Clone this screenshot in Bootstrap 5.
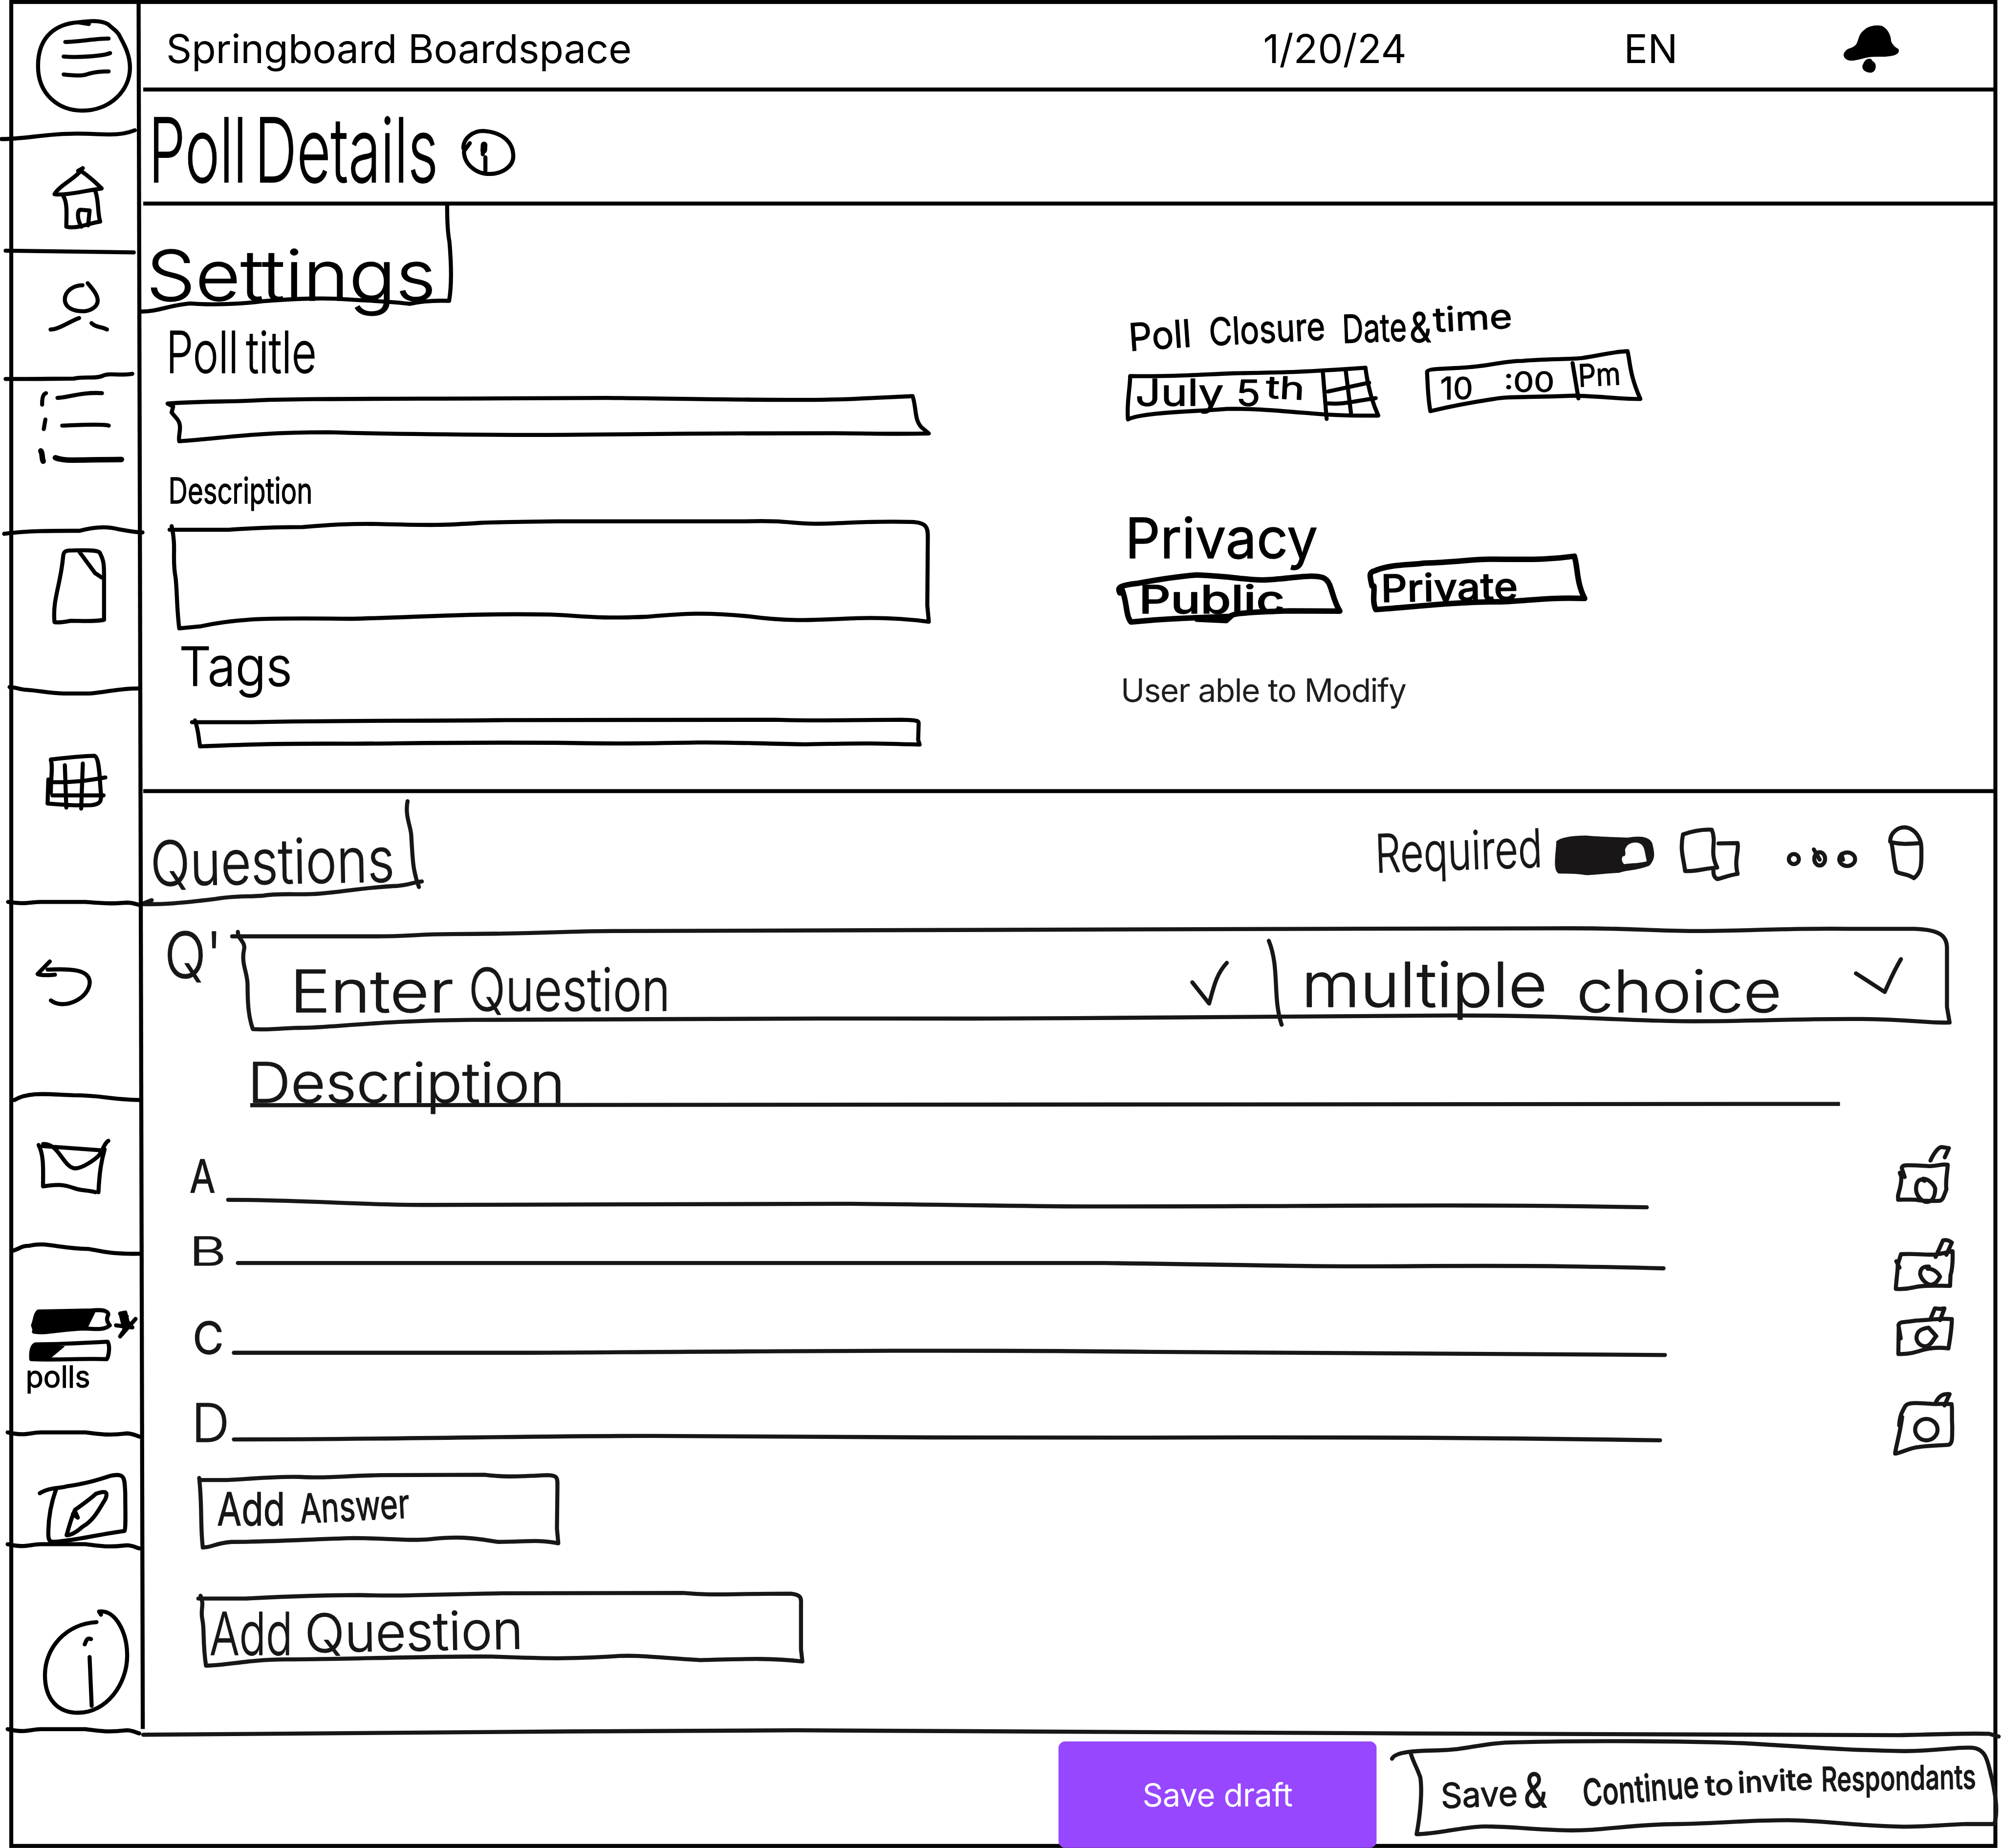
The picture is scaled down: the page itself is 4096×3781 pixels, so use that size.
<!DOCTYPE html>
<html lang="en">
<head>
<meta charset="utf-8">
<title>Springboard Boardspace - Poll Details</title>
<meta name="viewport" content="width=device-width, initial-scale=1">
<link href="https://cdn.jsdelivr.net/npm/bootstrap@5.3.0/dist/css/bootstrap.min.css" rel="stylesheet">
<style>
  html, body { overflow: hidden; background: #fff; }
  body { width: 4096px; height: 3781px; font-family: Inter, "Liberation Sans", sans-serif; color: #000; }
  .board { width: 4528px; height: 4180px; transform: scale(.9045); transform-origin: 0 0; }
  .board-frame { top: 0; left: 21px; width: 4497px; height: 4180px; border: 9px solid #000; pointer-events: none; }
  .rail { width: 324px; height: 3915px; }
  .rail-edge { top: 0; left: 0; pointer-events: none; }
  svg { display: block; overflow: visible; flex: none; }
  .ink path, .ink ellipse { fill: none; stroke: currentColor; stroke-width: 9.2px; stroke-linecap: round; stroke-linejoin: round; vector-effect: non-scaling-stroke; }
  .ink .solid { fill: currentColor; stroke-width: 2px; }
  .ink .knob { fill: #fff; stroke: none; }
  .ink .bold { stroke-width: 12.5px; }
  .ink .fat { stroke-width: 15px; }
  .ink .butt { stroke-linecap: butt; }
  .ink text { fill: currentColor; stroke: currentColor; stroke-width: 1.5px; stroke-linejoin: round; font-family: Inter, "Liberation Sans", sans-serif; font-weight: 300; }
  .ink .mid { font-weight: 400; }
  .ink .heavy { font-weight: 500; }
  .graphite { color: #181617; }
  .main-pane { margin-right: 12px; }
  .topbar { height: 207px; padding: 24px 0 0 52px; border-bottom: 9px solid #000; font-size: 90px; line-height: 1; }
  .topbar .brand { width: 2481px; letter-spacing: -.4px; }
  .topbar .day { width: 816px; }
  .topbar .lang { width: 492px; }
  .titlebar { height: 258px; border-bottom: 9px solid #000; }
  .settings { height: 1329px; border-bottom: 9px solid #000; }
  .settings-left { width: 2176px; }
  .questions { height: 2121px; }
  .modify { font-size: 73px; line-height: 1; letter-spacing: -1.7px; color: #1e1e1e; padding: 36px 0 0 35px; }
  .actions { height: 265px; }
  .tools { padding-right: 142px; }
  .answer { padding-right: 86px; }
  .btn-draft { width: 720px; height: 241px; margin: 24px 0 0 2394px; border-radius: 16px; background: #9747ff; color: #fff; font-size: 72px; line-height: 1; letter-spacing: -.7px; z-index: 2; }
  .sketch-btn { display: block; padding: 0; border: 0; border-radius: 0; color: inherit; }
</style>
<script src="https://cdn.jsdelivr.net/npm/bootstrap@5.3.0/dist/js/bootstrap.bundle.min.js"></script>
</head>
<body>
<div class="board position-relative">
  <div class="d-flex">

    <nav class="rail position-relative d-flex flex-column" aria-label="Main">
      <a class="text-reset" aria-label="Menu"><svg class="ink" width="324" height="310" viewBox="0 0 324 310"><g transform="scale(.33333 .76531)">
        <path d="M530 66C400 70 258 100 258 195C258 280 400 327 560 327C740 327 882 270 882 200C882 160 840 130 810 105C800 92 750 80 735 72C680 58 600 62 530 66L603 71"/>
        <path d="M443 124C540 123 650 114 737 114M432 167C520 171 700 166 747 157M432 220C560 226 580 222 610 217C660 211 700 211 737 211"/>
        <path d="M10 411C180 411 300 395 520 395C700 395 800 405 915 385"/></g></svg></a>
      <a class="text-reset" aria-label="Home"><svg class="ink" width="324" height="265" viewBox="0 310 324 265"><g transform="scale(.33333 .76531)">
        <path d="M530 505L562 497M548 505C500 530 400 550 370 574C450 578 560 565 690 557C650 540 600 520 548 505"/>
        <path d="M430 580C460 600 450 640 450 670C520 678 600 660 680 655C660 630 672 590 645 563M552 670C520 645 525 622 545 620L608 622L598 666"/>
        <path d="M38 741L908 746"/></g></svg></a>
      <a class="text-reset" aria-label="Profile"><svg class="ink" width="324" height="290" viewBox="0 575 324 290"><g transform="scale(.33333 .76531)">
        <path d="M560 843C500 843 440 860 440 885C440 910 500 920 560 920C610 920 663 908 663 888C663 870 620 850 595 837M343 974C400 974 480 948 537 940M621 955C650 968 690 965 726 974"/>
        <path d="M38 1120C150 1121 400 1119 500 1119C580 1112 640 1120 690 1112C740 1100 800 1112 898 1105"/></g></svg></a>
      <a class="text-reset" aria-label="Lists"><svg class="ink" width="324" height="350" viewBox="0 865 324 350">
        <g transform="scale(.33333 .76531)"><path d="M312 1162C290 1165 285 1180 286 1196M390 1176C450 1176 560 1158 692 1162M308 1240L297 1268M422 1258C500 1257 700 1252 738 1258"/>
        <path class="bold" d="M277 1333C290 1340 283 1355 293 1363M376 1353C440 1364 500 1359 824 1358"/></g>
        <g transform="translate(0 1180) scale(.33333 .76531)"><path d="M28 36C200 26 400 27 540 27C600 20 700 10 800 22C860 26 900 31 967 32"/></g></svg></a>
      <a class="text-reset" aria-label="Files"><svg class="ink" width="324" height="360" viewBox="0 1215 324 360"><g transform="translate(0 1180) scale(.33333 .76531)">
        <path d="M370 297C355 230 410 190 428 105C430 85 450 85 500 85C600 84 680 84 680 95C705 115 706 130 706 160L706 290C640 296 550 293 480 293C420 298 390 299 370 297M540 90L645 152L690 165"/>
        <path d="M65 489C110 489 130 496 180 497C260 499 330 507 430 508L610 508C740 503 800 493 938 493"/></g></svg></a>
      <a class="text-reset" aria-label="Calendar"><svg class="ink" width="324" height="480" viewBox="0 1575 324 480"><g transform="translate(0 1180) scale(.33333 .76531)">
        <path d="M345 705C360 720 345 760 345 800M328 762L323 833C400 836 500 840 620 838C690 835 690 825 682 790C675 740 670 695 640 692C570 692 400 700 345 703M440 720L450 845M562 715L551 848M365 770C500 771 600 765 715 756M355 809L703 809"/>
        <path d="M55 1124C180 1132 200 1124 280 1124L580 1124C700 1128 740 1130 860 1126C900 1126 920 1130 945 1133"/></g></svg></a>
      <a class="text-reset" aria-label="Back"><svg class="ink" width="324" height="430" viewBox="0 2055 324 430">
        <g transform="translate(0 1180) scale(.33333 .76531)"><path d="M338 1300L255 1337C290 1343 340 1340 373 1339M323 1324C480 1321 608 1323 609 1362C605 1410 430 1445 345 1415"/></g>
        <g transform="translate(0 2300) scale(.33333 1.19898)"><path d="M98 157C200 140 350 147 500 148C700 148 740 156 945 157"/></g></svg></a>
      <a class="text-reset" aria-label="Mail"><svg class="ink" width="324" height="335" viewBox="0 2485 324 335"><g transform="translate(0 2300) scale(.33333 1.19898)">
        <path d="M262 242C300 262 292 290 292 320C400 315 440 317 500 323C540 328 600 327 648 331M292 240C400 238 430 285 510 286C560 286 640 270 670 262C700 250 710 238 735 234M668 331C675 290 690 270 710 250M290 244L690 252"/>
        <path d="M92 441C150 435 150 432 200 432C300 424 400 437 600 438C700 442 740 448 945 447"/></g></svg></a>
      <a class="text-reset" aria-label="Polls"><svg class="ink" width="324" height="425" viewBox="0 2820 324 425"><g transform="translate(0 2300) scale(.33333 1.19898)">
        <path d="M225 582C240 570 240 560 260 556L620 554C700 552 735 555 735 562C720 570 725 575 745 582C700 593 630 588 560 588C400 590 300 598 230 594"/>
        <path class="solid" d="M213 582L255 556L650 554L590 588L400 592L230 597L222 590Z"/>
        <path d="M787 582L898 586L815 560L850 558L870 580L815 603L920 570M820 562L845 590L860 565"/>
        <path d="M212 645C208 630 220 620 240 618C400 618 600 615 730 613C748 620 740 638 725 646C600 644 400 648 212 646"/>
        <path class="solid" d="M208 646L225 620L435 622L345 643Z"/>
        <path d="M52 784C180 792 200 784 280 784L580 784C700 788 740 790 860 786C900 786 920 790 945 792"/></g>
        <text class="mid" x="58" y="3139" font-size="68" textLength="146" lengthAdjust="spacingAndGlyphs">polls</text></svg></a>
      <a class="text-reset" aria-label="Notes"><svg class="ink" width="324" height="255" viewBox="0 3245 324 255"><g transform="translate(0 2300) scale(.33333 1.19898)">
        <path d="M270 899C330 888 400 890 450 886C600 880 680 872 750 866C850 860 845 870 850 900C850 930 855 965 845 970C700 975 560 985 450 988C340 992 325 995 328 970C330 940 350 915 380 892M452 978C480 950 500 935 510 930C570 918 620 908 650 900C700 895 740 893 715 910C680 925 640 950 560 962C520 972 480 978 452 978M495 938L528 945L508 932"/>
        <path d="M52 995C180 1003 200 995 280 995L580 995C700 999 740 1001 860 997C900 997 920 1001 945 1003"/></g></svg></a>
      <a class="text-reset" aria-label="Info"><svg class="ink" width="324" height="415" viewBox="0 3500 324 415"><g transform="translate(0 2300) scale(.33333 1.19898)">
        <path d="M655 1142C450 1145 305 1190 305 1242C305 1290 400 1313 530 1313C720 1313 863 1260 863 1205C863 1160 780 1118 672 1122L685 1128M575 1184C590 1172 600 1172 618 1174M608 1208L622 1300"/>
        <path d="M52 1344C180 1352 200 1344 280 1344L580 1344C700 1348 740 1350 860 1346C900 1346 920 1350 945 1352"/></g></svg></a>
      <svg class="ink rail-edge position-absolute" width="324" height="3915" viewBox="0 0 324 3915"><path class="butt" d="M313.5 4L323 3911"/></svg>
    </nav>

    <main class="main-pane flex-grow-1">
      <header class="topbar d-flex align-items-center">
        <div class="brand text-nowrap">Springboard Boardspace</div>
        <div class="day">1/20/24</div>
        <div class="lang">EN</div>
        <svg class="ink" width="140" height="174" viewBox="4165 24 140 174" role="img" aria-label="Notifications"><g transform="translate(3600 0) scale(.59184 .33333)">
          <path class="solid" d="M1050 195C1070 175 1090 173 1108 178C1130 195 1143 240 1143 280C1150 310 1160 325 1172 335C1178 370 1150 383 1100 382C1040 382 1050 395 1000 408C975 412 965 390 965 370C970 340 985 330 992 328C1025 305 1015 270 1030 230C1038 210 1045 205 1050 195Z"/>
          <path class="solid" d="M1055 403C1065 398 1070 405 1072 416C1090 430 1088 480 1070 490C1045 490 1035 470 1037 445C1042 430 1043 410 1055 403Z"/></g></svg>
      </header>

      <div class="titlebar d-flex">
        <svg class="ink" width="700" height="249" viewBox="324 207 700 249">
          <text x="336" y="412" font-size="202" textLength="655" word-spacing="-30" lengthAdjust="spacingAndGlyphs">Poll Details</text></svg>
        <svg class="ink" width="160" height="249" viewBox="1024 207 160 249" role="img" aria-label="About polls"><g transform="translate(300 0) scale(.73342 .45918)">
          <path d="M1020 730C1020 680 1050 645 1080 645C1140 650 1174 700 1174 770C1174 820 1140 857 1100 857C1060 857 1022 810 1022 745L1040 705M1088 775L1088 840"/>
          <path class="fat" d="M1084 714L1083 740"/><path d="M1080 740L1080 760"/></g></svg>
      </div>

      <section class="settings d-flex">
        <div class="settings-left d-flex flex-column">
          <svg class="ink" width="716" height="260" viewBox="324 465 716 260"><g transform="translate(300 0) scale(.73342 .45918)">
            <path d="M970 1013C970 1100 972 1150 977 1190C983 1300 985 1400 976 1482C940 1480 900 1480 855 1497C800 1485 740 1483 650 1474C600 1467 500 1470 400 1484C350 1495 250 1505 180 1495C120 1500 80 1535 27 1535"/></g>
            <text x="331" y="680" font-size="158" textLength="655" lengthAdjust="spacingAndGlyphs">Settings</text></svg>
          <label><svg class="ink" width="1800" height="295" viewBox="324 725 1800 295">
            <text x="376" y="844" font-size="130" word-spacing="-14" textLength="340" lengthAdjust="spacingAndGlyphs">Poll title</text>
            <g transform="translate(340 700) scale(1.14796 .67602)"><path d="M34 315C100 306 150 310 210 304C300 298 400 300 900 296C1100 299 1300 308 1400 298L1502 290C1510 330 1505 370 1520 395L1534 415C1450 418 1400 414 1350 414C1000 414 900 420 750 420C500 418 430 415 350 411C200 411 150 430 57 441C54 420 65 390 52 365L42 345L45 325Z"/></g></svg></label>
          <label><svg class="ink" width="1800" height="410" viewBox="324 1020 1800 410">
            <text class="mid" x="381" y="1139" font-size="80" textLength="326" lengthAdjust="spacingAndGlyphs">Description</text>
            <g transform="translate(340 700) scale(1.14796 .67602)"><path d="M38 737L155 737C200 733 220 728 300 728C360 720 400 716 450 718C560 723 580 722 650 714C700 711 750 710 800 709L1170 709C1260 705 1260 717 1310 717C1370 717 1400 707 1500 711C1530 713 1532 730 1532 760L1531 990L1534 1045C1500 1037 1450 1030 1390 1033C1300 1040 1260 1045 1180 1027C1090 1012 1050 1018 980 1028C880 1036 850 1025 790 1021C650 1016 550 1028 400 1035C250 1033 180 1030 100 1060L57 1067C52 1000 53 950 50 900C42 830 52 800 42 725"/></g></svg></label>
          <label><svg class="ink" width="1800" height="355" viewBox="324 1430 1800 355">
            <text x="405" y="1551" font-size="122" textLength="256" lengthAdjust="spacingAndGlyphs">Tags</text>
            <g transform="translate(340 700) scale(1.14796 .67602)"><path d="M82 1381L200 1381C400 1374 500 1378 700 1374L1230 1373C1300 1376 1300 1375 1480 1373C1515 1374 1514 1378 1514 1385L1513 1440L1516 1456C1400 1450 1400 1452 1290 1455C1200 1453 1150 1448 1080 1449C950 1453 900 1453 800 1450C600 1448 500 1452 400 1453C250 1452 200 1455 98 1462C94 1420 95 1410 88 1375"/></g></svg></label>
        </div>
        <div class="d-flex flex-column">
          <svg class="ink" width="1000" height="355" viewBox="2500 465 1000 355">
            <text class="mid" x="2555" y="794" font-size="86" textLength="142" lengthAdjust="spacingAndGlyphs" transform="rotate(-4 2555 794)">Poll</text>
            <text class="mid" x="2736" y="782" font-size="86" textLength="263" lengthAdjust="spacingAndGlyphs" transform="rotate(-3 2736 782)">Closure</text>
            <text class="mid" x="3037" y="776" font-size="88" textLength="146" lengthAdjust="spacingAndGlyphs" transform="rotate(-2 3037 776)">Date</text>
            <text class="mid" x="3188" y="774" font-size="94" textLength="50" lengthAdjust="spacingAndGlyphs">&amp;</text>
            <text class="mid" x="3243" y="751" font-size="76" textLength="179" lengthAdjust="spacingAndGlyphs" transform="rotate(-3 3243 751)">time</text></svg>
          <div class="d-flex">
            <svg class="ink" width="690" height="310" viewBox="2500 820 690 310"><g transform="translate(2500 660) scale(.82908 .625)">
              <path d="M68 305C200 307 250 300 350 295C500 292 550 290 710 275C715 330 725 390 745 448C650 450 600 445 560 440C450 428 400 422 330 424C260 433 100 435 62 462C58 400 68 350 68 305M594 295L604 460M656 283L671 445M608 361L720 329M608 404C650 408 670 398 738 385"/></g>
              <text class="mid" x="2568" y="918" font-size="84" textLength="200" lengthAdjust="spacingAndGlyphs">July</text>
              <text class="mid" x="2796" y="918" font-size="80" textLength="55" lengthAdjust="spacingAndGlyphs">5</text>
              <text class="mid" x="2862" y="900" font-size="70" textLength="88" lengthAdjust="spacingAndGlyphs" transform="rotate(3 2862 900)">th</text></svg>
            <svg class="ink" width="560" height="310" viewBox="3190 820 560 310"><g transform="translate(2500 660) scale(.82908 .625)">
              <path d="M878 290C880 275 950 280 1000 272C1060 265 1090 250 1140 250C1200 243 1260 245 1300 240C1360 228 1380 218 1425 215C1432 250 1430 300 1460 388C1400 388 1350 378 1280 376C1150 383 1100 378 1060 388C1000 400 950 412 887 432C880 380 880 340 878 290M1275 258L1291 386"/></g>
              <text class="mid" x="3258" y="903" font-size="70" textLength="74" lengthAdjust="spacingAndGlyphs">10</text>
              <text class="mid" x="3402" y="887" font-size="64" textLength="114" lengthAdjust="spacingAndGlyphs">:00</text>
              <text class="mid" x="3571" y="875" font-size="70" textLength="96" lengthAdjust="spacingAndGlyphs" transform="rotate(-3 3571 875)">Pm</text></svg>
          </div>
          <svg class="ink" width="1200" height="160" viewBox="2500 1130 1200 160">
            <text class="mid" x="2545" y="1263" font-size="126" textLength="436" lengthAdjust="spacingAndGlyphs">Privacy</text></svg>
          <div class="d-flex">
            <button type="button" class="btn sketch-btn"><svg class="ink" width="570" height="199" viewBox="2500 1290 570 199"><g transform="translate(2500 660) scale(.82908 .625)">
              <path class="bold" d="M40 1090C32 1070 40 1062 90 1055C150 1040 200 1030 250 1025C350 1030 380 1043 430 1043C500 1040 560 1020 595 1035C620 1050 615 1100 640 1156L500 1155C400 1160 350 1162 340 1175C200 1182 150 1185 70 1195C55 1170 60 1120 45 1075M250 1185L330 1190L345 1172"/></g>
              <text class="heavy" x="2576" y="1387" font-size="88" textLength="330" lengthAdjust="spacingAndGlyphs">Public</text></svg></button>
            <button type="button" class="btn sketch-btn"><svg class="ink" width="560" height="199" viewBox="3070 1290 560 199"><g transform="translate(2500 660) scale(.82908 .625)">
              <path class="bold" d="M728 1065C722 1030 718 1015 735 1010C780 985 830 990 870 982C950 980 1000 968 1050 968C1150 968 1200 972 1280 957C1290 1000 1285 1050 1308 1110C1200 1105 1150 1120 1080 1122C950 1122 850 1140 738 1150C728 1120 735 1090 733 1065"/></g>
              <text class="heavy" x="3124" y="1362" font-size="86" textLength="310" lengthAdjust="spacingAndGlyphs" transform="rotate(-1 3124 1362)">Private</text></svg></button>
          </div>
          <div class="modify">User able to Modify</div>
        </div>
      </section>

      <section class="questions graphite">
        <div class="d-flex justify-content-between">
          <svg class="ink" width="676" height="266" viewBox="324 1794 676 266"><g transform="translate(320 1780) scale(.82908 .49745)">
            <path d="M726 65C718 130 735 180 736 220C740 330 740 380 757 455M765 430C740 435 730 445 700 450C620 455 560 475 500 483C440 495 380 480 330 495C280 500 250 495 200 510C100 530 60 535 0 533L28 515"/></g>
            <text x="341" y="2004" font-size="140" textLength="552" lengthAdjust="spacingAndGlyphs" transform="rotate(-1 341 2004)">Questions</text></svg>
          <div class="tools d-flex">
            <svg class="ink" width="400" height="266" viewBox="3100 1794 400 266"><text x="3112" y="1974" font-size="120" textLength="378" lengthAdjust="spacingAndGlyphs" transform="rotate(-2 3112 1974)">Required</text></svg>
            <svg class="ink" width="280" height="266" viewBox="3500 1794 280 266" role="img" aria-label="Required on"><g transform="translate(3050 1800) scale(.94260 .35714)">
              <path class="solid" d="M500 290C510 265 540 255 570 255C610 265 650 265 670 268C700 255 720 260 728 300C735 370 735 400 722 440C690 475 670 465 650 485C610 490 590 500 570 500C550 490 520 490 505 490C490 470 500 350 500 290Z"/>
              <path class="knob" d="M664 340C668 310 676 297 690 296C703 298 709 320 711 350L716 415C700 428 680 426 662 433C656 420 655 400 658 384C668 384 664 360 664 340Z"/></g></svg>
            <svg class="ink" width="220" height="266" viewBox="3780 1794 220 266" role="img" aria-label="Duplicate"><g transform="translate(3050 1800) scale(.94260 .35714)">
              <path d="M803 245C830 220 850 212 872 215C885 300 865 350 885 455C850 460 840 480 808 477C805 400 795 350 803 245M888 302L934 300C938 350 925 400 934 495C910 505 900 520 885 528C875 510 876 490 876 465"/></g></svg>
            <svg class="ink" width="240" height="266" viewBox="4000 1794 240 266" role="img" aria-label="More"><g transform="translate(3050 1800) scale(.94260 .35714)">
              <ellipse cx="1069" cy="401" rx="12" ry="32"/><ellipse cx="1131" cy="400" rx="13" ry="42"/><path d="M1117 340L1131 405"/><ellipse cx="1197" cy="402" rx="19" ry="43"/><path d="M1183 370L1187 405"/></g></svg>
            <svg class="ink" width="134" height="266" viewBox="4240 1794 134 266" role="img" aria-label="Delete"><g transform="translate(3050 1800) scale(.94260 .35714)">
              <path d="M1300 290C1300 230 1320 200 1335 200C1360 205 1375 270 1375 330C1375 420 1378 480 1357 522C1340 490 1325 500 1315 480C1308 420 1308 350 1303 295C1330 310 1345 305 1372 300"/></g></svg>
          </div>
        </div>

        <div class="d-flex">
          <svg class="ink" width="191" height="310" viewBox="324 2060 191 310">
            <text x="372" y="2212" font-size="144" textLength="130" lengthAdjust="spacingAndGlyphs">Q'</text></svg>
          <svg class="ink" width="3905" height="310" viewBox="515 2060 3905 310">
            <path stroke="#000" d="M525 2118L851 2118C920 2118 950 2113 1025 2113C1250 2112 1300 2105 1398 2106C2000 2105 2500 2102 3000 2101L3500 2100C3700 2098 3720 2106 3832 2106C3960 2106 4040 2099 4181 2101L4330 2101C4390 2103 4404 2118 4404 2145L4404 2278L4410 2313C4350 2315 4320 2304 4181 2305C4040 2305 3950 2311 3804 2310C3650 2308 3560 2297 3286 2297C3050 2298 2600 2303 2200 2304C1800 2303 1300 2306 1066 2307C860 2308 740 2326 676 2325C630 2326 610 2330 572 2328C562 2300 560 2270 560 2228C560 2200 545 2180 552 2148C556 2130 538 2125 538 2108"/>
            <text x="656" y="2290" font-size="132" textLength="370" lengthAdjust="spacingAndGlyphs">Enter</text>
            <text x="1060" y="2286" font-size="134" textLength="456" lengthAdjust="spacingAndGlyphs">Question</text>
            <path d="M2697 2222L2735 2270C2745 2235 2750 2205 2775 2178M2870 2128C2895 2190 2878 2255 2899 2318"/>
            <text x="2944" y="2277" font-size="140" textLength="556" lengthAdjust="spacingAndGlyphs">multiple</text>
            <text x="3566" y="2290" font-size="132" textLength="464" lengthAdjust="spacingAndGlyphs">choice</text>
            <g transform="translate(3050 1800) scale(.94260 .35714)"><path d="M1218 1125L1287 1243C1300 1170 1305 1130 1326 1035"/></g></svg>
        </div>

        <svg class="ink" width="3900" height="160" viewBox="324 2370 3900 160">
          <text x="560" y="2494" font-size="126" textLength="718" lengthAdjust="spacingAndGlyphs">Description</text>
          <path class="butt" stroke="#000" d="M566 2500L4162 2497"/></svg>

        <div class="answer d-flex justify-content-between">
          <svg class="ink" width="3476" height="230" viewBox="324 2530 3476 230"><text class="mid" x="429" y="2698" font-size="104" textLength="58" lengthAdjust="spacingAndGlyphs">A</text>
            <path d="M516 2714C700 2714 800 2726 973 2725.500L1920 2723C2200 2725 2350 2730 2512 2729C3000 2729 3300 2723 3725 2731"/></svg>
          <svg class="ink" width="170" height="230" viewBox="4260 2530 170 230" role="img" aria-label="Add picture"><g transform="translate(4200 2550) scale(.33333 .48469)">
            <path d="M285 335C265 320 305 290 302 230L292 212M325 232L305 190C310 175 330 177 360 177C420 177 460 181 500 181C550 180 580 170 617 175C615 210 600 250 608 290C590 320 585 342 560 343C500 345 460 345 400 338C350 336 320 338 280 338M460 250C430 235 402 250 402 290C405 325 450 350 480 348C515 345 532 320 532 285C520 260 480 240 450 240M500 155C530 110 560 92 575 92L625 97L597 140"/></g></svg>
        </div>
        <div class="answer d-flex justify-content-between">
          <svg class="ink" width="3476" height="140" viewBox="324 2760 3476 140"><text x="428" y="2862" font-size="90" textLength="84" lengthAdjust="spacingAndGlyphs">B</text>
            <path d="M538 2857L2500 2857C2900 2862 2950 2866 3200 2864C3500 2862 3650 2866 3763 2869"/></svg>
          <svg class="ink" width="170" height="140" viewBox="4260 2760 170 140" role="img" aria-label="Add picture"><g transform="translate(4200 2550) scale(.33333 .48469)">
            <path d="M268 625L290 655M265 750C270 700 280 660 278 640L300 592C400 588 450 596 530 594C580 590 620 582 650 578C652 620 650 660 636 690L633 740C550 740 450 735 380 748C330 756 300 756 265 754M490 650C450 648 430 660 430 685C440 715 480 735 505 735C540 730 555 710 565 697C545 670 510 660 480 660M535 605L585 528C610 522 630 530 645 538L608 595"/></g></svg>
        </div>
        <div class="answer d-flex justify-content-between">
          <svg class="ink" width="3476" height="190" viewBox="324 2900 3476 190"><text class="mid" x="436" y="3063" font-size="100" textLength="70" lengthAdjust="spacingAndGlyphs">C</text>
            <path d="M529 3060L1200 3060C1600 3058 2100 3052 2600 3058C3100 3062 3500 3062 3766 3065"/></svg>
          <svg class="ink" width="170" height="190" viewBox="4260 2900 170 190" role="img" aria-label="Add picture"><g transform="translate(4200 2550) scale(.33333 .48469)">
            <path d="M298 985L283 925C285 905 320 912 400 902C500 900 550 890 645 895C645 940 630 1000 622 1032C550 1025 480 1030 420 1045C360 1058 320 1058 282 1058L285 920M487 935C430 940 405 955 405 985C410 1010 440 1022 470 1022C510 1015 520 985 540 975ZM500 895L530 845L565 848L595 845L565 900"/></g></svg>
        </div>
        <div class="answer d-flex justify-content-between">
          <svg class="ink" width="3476" height="210" viewBox="324 3090 3476 210"><text x="433" y="3262" font-size="120" textLength="86" lengthAdjust="spacingAndGlyphs">D</text>
            <path d="M529 3256C900 3256 1200 3248 1473 3248C1900 3249 2200 3254 2600 3252C3100 3250 3500 3254 3755 3258"/></svg>
          <svg class="ink" width="170" height="210" viewBox="4260 3090 170 210" role="img" aria-label="Add picture"><g transform="translate(4200 2550) scale(.33333 .48469)">
            <path d="M308 1352C290 1440 265 1490 260 1523C300 1520 360 1495 420 1492C500 1485 560 1485 620 1482C655 1478 645 1440 648 1400C642 1340 650 1320 643 1292C600 1288 550 1294 500 1290C430 1288 350 1280 330 1300C305 1330 290 1350 288 1392M535 1285C560 1250 590 1243 630 1245L595 1298"/><ellipse cx="472" cy="1411" rx="76" ry="50"/></g></svg>
        </div>

        <button type="button" class="btn sketch-btn"><svg class="ink" width="960" height="230" viewBox="324 3300 960 230"><g transform="translate(320 2580) scale(1.02041 .79082)">
          <path stroke="#000" d="M130 971L190 971C250 967 300 960 350 962C420 966 430 960 530 957L760 956C800 962 820 962 900 957C925 958 922 965 922 1000L921 1110L924 1152C880 1140 850 1148 790 1148C730 1135 700 1132 640 1140C590 1146 540 1137 470 1137C380 1140 280 1148 200 1148C160 1152 160 1163 136 1164C130 1100 135 1050 128 965"/></g>
          <text class="mid" x="491" y="3451" font-size="104" textLength="154" lengthAdjust="spacingAndGlyphs">Add</text>
          <text class="mid" x="680" y="3446" font-size="92" textLength="248" lengthAdjust="spacingAndGlyphs" transform="rotate(-3 680 3446)">Answer</text></svg></button>
        <button type="button" class="btn sketch-btn"><svg class="ink" width="1560" height="385" viewBox="324 3530 1560 385"><g transform="translate(320 2580) scale(1.02041 .79082)">
          <path stroke="#000" d="M126 1310L230 1310C350 1302 420 1300 480 1300C600 1304 620 1298 800 1295L1200 1294C1270 1302 1300 1296 1440 1296C1465 1300 1462 1310 1462 1330L1462 1455L1465 1490C1400 1480 1350 1482 1240 1486C1150 1480 1100 1470 1050 1475C950 1483 900 1482 780 1476C650 1474 450 1484 320 1484C230 1485 200 1500 143 1502C135 1430 140 1400 135 1370C130 1340 140 1330 131 1302"/></g>
          <text x="474" y="3743" font-size="134" textLength="188" lengthAdjust="spacingAndGlyphs">Add</text>
          <text x="690" y="3738" font-size="120" textLength="494" lengthAdjust="spacingAndGlyphs" transform="rotate(-1 690 3738)">Question</text></svg></button>
      </section>
    </main>
  </div>

  <div class="board-frame position-absolute"></div>

  <footer class="actions position-relative graphite d-flex">
    <svg class="ink position-absolute top-0 start-0" width="4520" height="24" viewBox="0 3915 4520 24"><path d="M324 3924C900 3924 1300 3913 1800 3914C2400 3918 2800 3919 3183 3921C3700 3924 4000 3923 4295 3925C4400 3923 4450 3920 4500 3922L4521 3928"/></svg>
    <button type="button" class="btn btn-draft p-0 flex-shrink-0 position-relative">Save draft</button>
    <button type="button" class="btn sketch-btn"><svg class="ink" width="1400" height="265" viewBox="3114 3915 1400 265"><g transform="translate(2350 3880) scale(1.38903 .33333)">
      <path d="M575 295C580 250 610 240 650 238C700 235 720 185 780 183C900 170 1050 175 1150 190C1250 215 1330 240 1410 243C1470 240 1490 215 1520 220C1545 230 1545 330 1552 430C1558 550 1562 650 1556 738L1510 738C1450 750 1430 760 1400 755C1330 750 1280 715 1220 712C1150 712 1100 735 1040 738C960 740 920 785 860 781C800 775 760 750 720 755C680 765 650 805 615 807C620 700 625 520 621 420C615 350 610 320 606 265"/></g>
      <text class="mid" x="3260" y="4090" font-size="78" textLength="174" lengthAdjust="spacingAndGlyphs" transform="rotate(-2 3260 4090)">Save</text>
      <text class="mid" x="3446" y="4088" font-size="108" textLength="54" lengthAdjust="spacingAndGlyphs">&amp;</text>
      <text class="heavy" x="3582" y="4086" font-size="84" textLength="264" lengthAdjust="spacingAndGlyphs" transform="rotate(-4.500 3582 4086)">Continue</text>
      <text class="heavy" x="3858" y="4062" font-size="64" textLength="64" lengthAdjust="spacingAndGlyphs" transform="rotate(-3 3858 4062)">to</text>
      <text class="heavy" x="3932" y="4056" font-size="66" textLength="170" lengthAdjust="spacingAndGlyphs" transform="rotate(-3 3932 4056)">invite</text>
      <text class="heavy" x="4120" y="4052" font-size="76" textLength="350" lengthAdjust="spacingAndGlyphs" transform="rotate(-1 4120 4052)">Respondants</text></svg></button>
  </footer>
</div>
</body>
</html>
